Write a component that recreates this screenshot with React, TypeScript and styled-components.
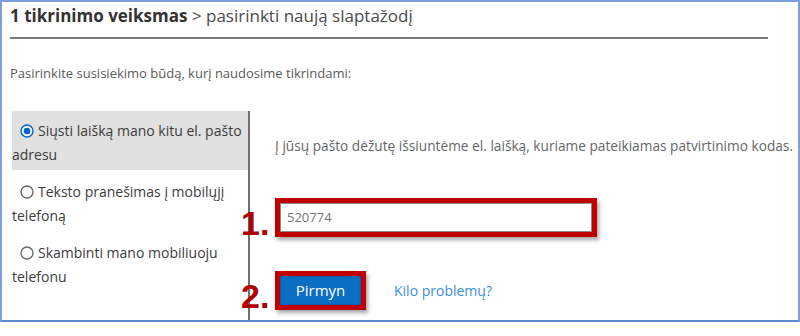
import React from "react";
import styled, { createGlobalStyle } from "styled-components";

const Global = createGlobalStyle`
  html, body { margin: 0; padding: 0; background: #fff; }
  body { font-family: "Open Sans", "Noto Sans", sans-serif; }
`;

const Frame = styled.div`
  width: 800px;
  height: 322px;
  box-sizing: border-box;
  border: 2px solid #7f9fda;
  border-bottom-color: #5f89d2;
  background: #fff;
  padding-left: 8px;
  display: flex;
  flex-direction: column;
`;

const Header = styled.div`
  width: 758px;
  padding: 2px 0 9px;
  border-bottom: 2px solid #7a7a7a;
  font-size: 17px;
  line-height: 24px;
  color: #4a4a4a;
  white-space: nowrap;
`;

const Strong = styled.span`
  font-weight: 700;
  color: #333;
`;

const Subtitle = styled.div`
  margin-top: 22px;
  font-size: 13px;
  line-height: 24px;
  color: #5a5a5a;
`;

const Body = styled.div`
  margin-top: 26px;
  flex: 1;
  display: flex;
`;

const Options = styled.div`
  margin-left: 2px;
  width: 236px;
  border-right: 2px solid #707070;
`;

const Option = styled.label<{ $selected?: boolean }>`
  display: block;
  padding: 8px 0 3px;
  margin-bottom: 2px;
  background: ${(p) => (p.$selected ? "#e1e1e1" : "transparent")};
  font-size: 14px;
  line-height: 24px;
  color: #3c3c3c;
  text-indent: 8px;
`;

const Radio = styled.svg`
  width: 14px;
  height: 14px;
  vertical-align: -2px;
  margin-right: 4px;
`;

const Main = styled.div`
  flex: 1;
  padding: 23px 0 0 25px;
  display: flex;
  flex-direction: column;
  align-items: flex-start;
`;

const Info = styled.div`
  font-size: 13.7px;
  line-height: 24px;
  color: #666;
  white-space: nowrap;
`;

const Marked = styled.div`
  position: relative;
  border: 5px solid #c00000;
  box-shadow: 2px 3px 4px rgba(0, 0, 0, 0.35);
`;

const Step = styled.span`
  position: absolute;
  left: -39px;
  bottom: -8px;
  font-family: "Liberation Sans", Arial, sans-serif;
  font-weight: 700;
  font-size: 34px;
  line-height: 34px;
  color: #b00000;
`;

const CodeBox = styled(Marked)`
  margin-top: 40px;
`;

const CodeInput = styled.div`
  width: 304px;
  height: 27px;
  border: 1px solid #8a8a8a;
  background: #fff;
  box-sizing: content-box;
  padding-left: 6px;
  font-size: 13px;
  line-height: 27px;
  color: #777;
`;

const Actions = styled.div`
  margin-top: 34px;
  display: flex;
  align-items: center;
  gap: 28px;
`;

const Button = styled.div`
  width: 81px;
  height: 29px;
  background: #0a6fc4;
  box-shadow: inset 0 0 2px rgba(0, 0, 0, 0.5);
  color: #fff;
  font-size: 15px;
  line-height: 29px;
  text-align: center;
`;

const Link = styled.span`
  font-size: 14px;
  color: #3d8fdd;
`;

function RadioIcon({ checked }: { checked?: boolean }) {
  return (
    <Radio viewBox="0 0 14 14">
      <circle
        cx="7"
        cy="7"
        r="6"
        fill="#fff"
        stroke={checked ? "#0067c0" : "#6a6a6a"}
        strokeWidth="1.4"
      />
      {checked && <circle cx="7" cy="7" r="3.3" fill="#0067c0" />}
    </Radio>
  );
}

export default function App() {
  return (
    <>
      <Global />
      <Frame>
        <Header>
          <Strong>1 tikrinimo veiksmas</Strong> &gt; pasirinkti naują slaptažodį
        </Header>
        <Subtitle>Pasirinkite susisiekimo būdą, kurį naudosime tikrindami:</Subtitle>
        <Body>
          <Options>
            <Option $selected>
              <RadioIcon checked />
              Siųsti laišką mano kitu el. pašto adresu
            </Option>
            <Option>
              <RadioIcon />
              Teksto pranešimas į mobilųjį telefoną
            </Option>
            <Option>
              <RadioIcon />
              Skambinti mano mobiliuoju telefonu
            </Option>
          </Options>
          <Main>
            <Info>
              Į jūsų pašto dėžutę išsiuntėme el. laišką, kuriame pateikiamas patvirtinimo kodas.
            </Info>
            <CodeBox>
              <Step>1.</Step>
              <CodeInput>520774</CodeInput>
            </CodeBox>
            <Actions>
              <Marked>
                <Step>2.</Step>
                <Button>Pirmyn</Button>
              </Marked>
              <Link>Kilo problemų?</Link>
            </Actions>
          </Main>
        </Body>
      </Frame>
    </>
  );
}
